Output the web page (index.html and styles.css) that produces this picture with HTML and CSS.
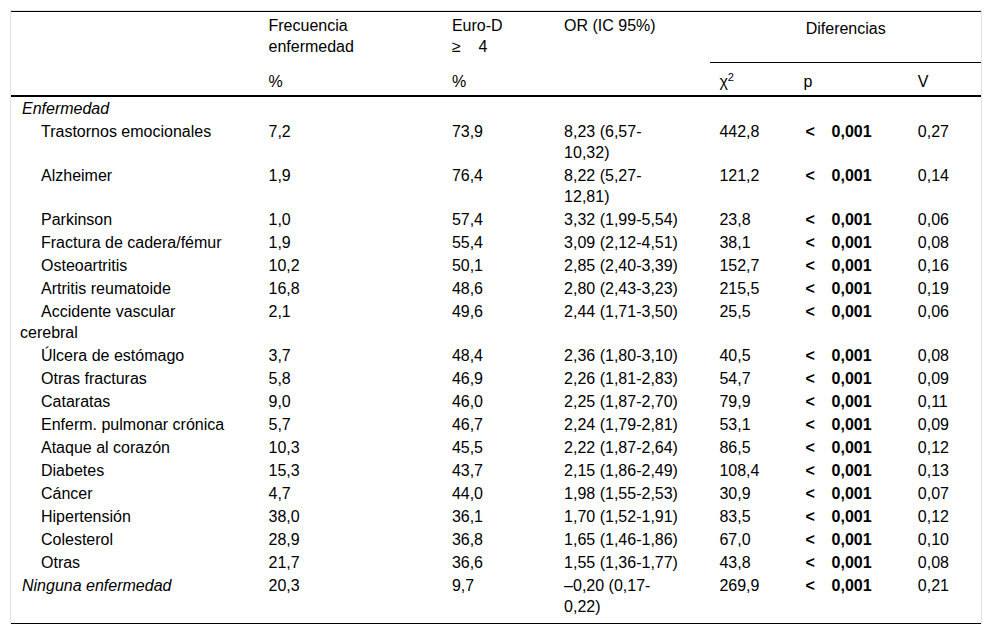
FILE: index.html
```html
<!DOCTYPE html>
<html lang="es">
<head>
<meta charset="utf-8">
<title>Tabla</title>
<link rel="stylesheet" href="styles.css">
</head>
<body>
<div class="wrap">
<table class="tbl">
<colgroup>
<col class="c1"><col class="c2"><col class="c3"><col class="c4"><col class="c5"><col class="c6"><col class="c7">
</colgroup>
<thead>
<tr class="h1">
<th></th>
<th>Frecuencia enfermedad</th>
<th>Euro-D ≥&nbsp;&nbsp;&nbsp;&nbsp;4</th>
<th>OR (IC 95%)</th>
<th colspan="3" class="dif">Diferencias</th>
</tr>
<tr class="h2">
<th></th>
<th>%</th>
<th>%</th>
<th></th>
<th>χ<sup>2</sup></th>
<th>p</th>
<th>V</th>
</tr>
</thead>
<tbody>
<tr><td class="grp">Enfermedad</td><td></td><td></td><td></td><td></td><td></td><td></td></tr>
<tr><td class="sub">Trastornos emocionales</td><td>7,2</td><td>73,9</td><td>8,23 (6,57-10,32)</td><td>442,8</td><td><span class="lt">&lt;</span><b>0,001</b></td><td>0,27</td></tr>
<tr><td class="sub">Alzheimer</td><td>1,9</td><td>76,4</td><td>8,22 (5,27-12,81)</td><td>121,2</td><td><span class="lt">&lt;</span><b>0,001</b></td><td>0,14</td></tr>
<tr><td class="sub">Parkinson</td><td>1,0</td><td>57,4</td><td>3,32 (1,99-5,54)</td><td>23,8</td><td><span class="lt">&lt;</span><b>0,001</b></td><td>0,06</td></tr>
<tr><td class="sub">Fractura de cadera/fémur</td><td>1,9</td><td>55,4</td><td>3,09 (2,12-4,51)</td><td>38,1</td><td><span class="lt">&lt;</span><b>0,001</b></td><td>0,08</td></tr>
<tr><td class="sub">Osteoartritis</td><td>10,2</td><td>50,1</td><td>2,85 (2,40-3,39)</td><td>152,7</td><td><span class="lt">&lt;</span><b>0,001</b></td><td>0,16</td></tr>
<tr><td class="sub">Artritis reumatoide</td><td>16,8</td><td>48,6</td><td>2,80 (2,43-3,23)</td><td>215,5</td><td><span class="lt">&lt;</span><b>0,001</b></td><td>0,19</td></tr>
<tr><td class="sub">Accidente vascular cerebral</td><td>2,1</td><td>49,6</td><td>2,44 (1,71-3,50)</td><td>25,5</td><td><span class="lt">&lt;</span><b>0,001</b></td><td>0,06</td></tr>
<tr><td class="sub">Úlcera de estómago</td><td>3,7</td><td>48,4</td><td>2,36 (1,80-3,10)</td><td>40,5</td><td><span class="lt">&lt;</span><b>0,001</b></td><td>0,08</td></tr>
<tr><td class="sub">Otras fracturas</td><td>5,8</td><td>46,9</td><td>2,26 (1,81-2,83)</td><td>54,7</td><td><span class="lt">&lt;</span><b>0,001</b></td><td>0,09</td></tr>
<tr><td class="sub">Cataratas</td><td>9,0</td><td>46,0</td><td>2,25 (1,87-2,70)</td><td>79,9</td><td><span class="lt">&lt;</span><b>0,001</b></td><td>0,11</td></tr>
<tr><td class="sub">Enferm. pulmonar crónica</td><td>5,7</td><td>46,7</td><td>2,24 (1,79-2,81)</td><td>53,1</td><td><span class="lt">&lt;</span><b>0,001</b></td><td>0,09</td></tr>
<tr><td class="sub">Ataque al corazón</td><td>10,3</td><td>45,5</td><td>2,22 (1,87-2,64)</td><td>86,5</td><td><span class="lt">&lt;</span><b>0,001</b></td><td>0,12</td></tr>
<tr><td class="sub">Diabetes</td><td>15,3</td><td>43,7</td><td>2,15 (1,86-2,49)</td><td>108,4</td><td><span class="lt">&lt;</span><b>0,001</b></td><td>0,13</td></tr>
<tr><td class="sub">Cáncer</td><td>4,7</td><td>44,0</td><td>1,98 (1,55-2,53)</td><td>30,9</td><td><span class="lt">&lt;</span><b>0,001</b></td><td>0,07</td></tr>
<tr><td class="sub">Hipertensión</td><td>38,0</td><td>36,1</td><td>1,70 (1,52-1,91)</td><td>83,5</td><td><span class="lt">&lt;</span><b>0,001</b></td><td>0,12</td></tr>
<tr><td class="sub">Colesterol</td><td>28,9</td><td>36,8</td><td>1,65 (1,46-1,86)</td><td>67,0</td><td><span class="lt">&lt;</span><b>0,001</b></td><td>0,10</td></tr>
<tr><td class="sub">Otras</td><td>21,7</td><td>36,6</td><td>1,55 (1,36-1,77)</td><td>43,8</td><td><span class="lt">&lt;</span><b>0,001</b></td><td>0,08</td></tr>
<tr class="last"><td class="grp">Ninguna enfermedad</td><td>20,3</td><td>9,7</td><td>–0,20 (0,17-0,22)</td><td>269,9</td><td><span class="lt">&lt;</span><b>0,001</b></td><td>0,21</td></tr>
</tbody>
</table>
</div>
</body>
</html>
```
FILE: styles.css
```css
html, body {
  margin: 0;
  padding: 0;
  background: #fff;
}

body {
  font-family: "Liberation Sans", Arial, sans-serif;
  font-size: 16px;
  line-height: 21px;
  color: #000;
}

.wrap {
  margin: 10px 0 0 10px;
  width: 970px;
  border: 1px solid #e2e2e2;
  border-bottom: none;
}

.tbl {
  width: 970px;
  table-layout: fixed;
  border-collapse: separate;
  border-spacing: 0;
  border-top: 1px solid #000;
  border-bottom: 1px solid #000;
}

.c1 { width: 248px; }
.c2 { width: 183px; }
.c3 { width: 112px; }
.c4 { width: 155px; }
.c5 { width: 84px; }
.c6 { width: 114px; }
.c7 { width: 72px; }

.tbl th,
.tbl td {
  text-align: left;
  vertical-align: top;
  font-weight: normal;
  padding: 1px 27px 1px 9px;
}

.h1 th {
  padding-top: 3px;
  padding-bottom: 6px;
}

.h1 th.dif {
  text-align: center;
  padding: 6px 9px 0 9px;
  border-bottom: 1px solid #000;
}

.h2 th {
  padding-top: 8px;
  padding-bottom: 3px;
  border-bottom: 2px solid #000;
}

.h2 sup {
  font-size: 11px;
  line-height: 0;
  vertical-align: 6px;
}

.tbl td.grp {
  font-style: italic;
  padding-left: 11px;
}

.sub {
  text-indent: 21px;
}

.lt {
  display: inline-block;
  width: 26px;
  padding-left: 2px;
  font-weight: bold;
}

.tbl b {
  font-weight: bold;
}

.last td {
  padding-bottom: 6px;
}
```
